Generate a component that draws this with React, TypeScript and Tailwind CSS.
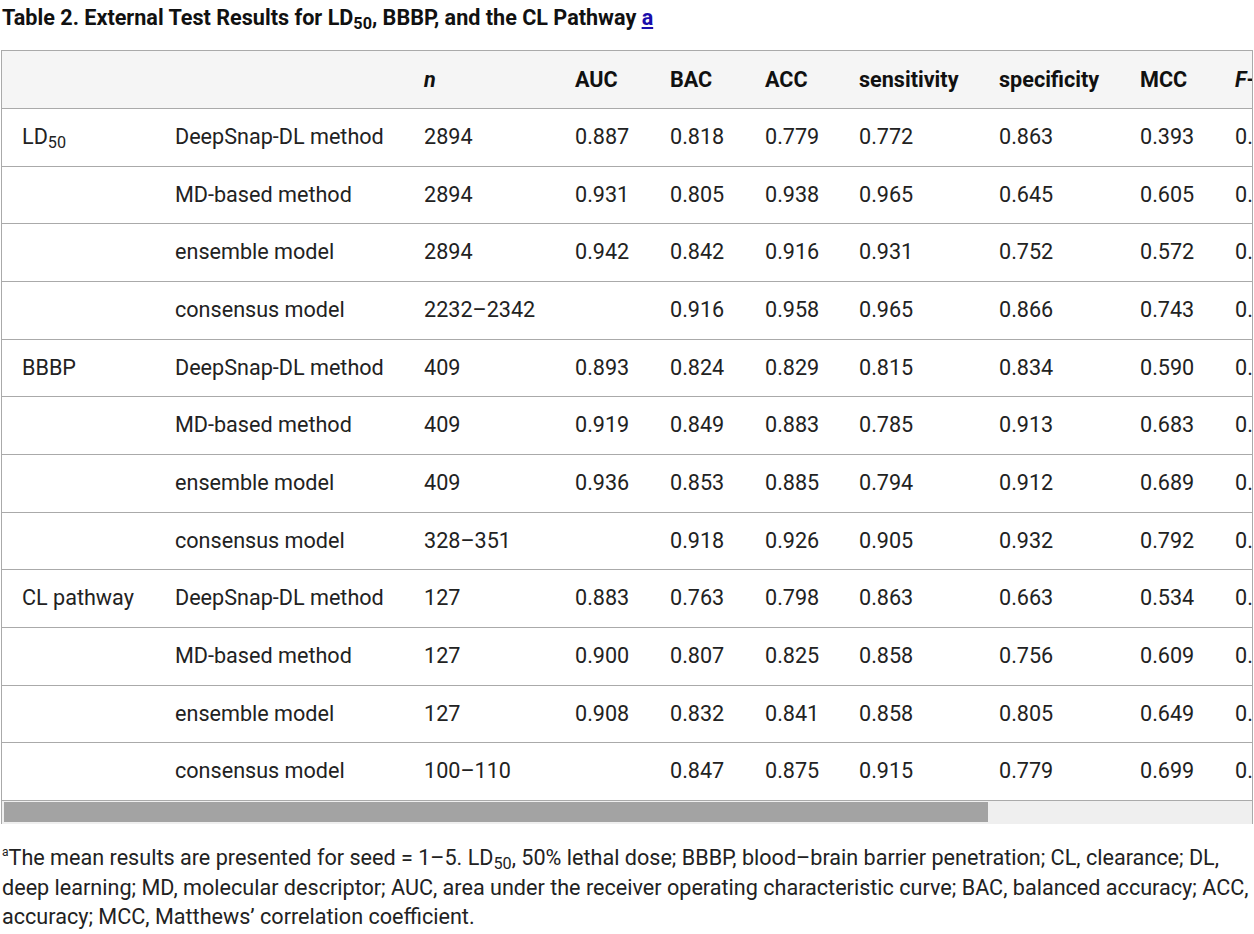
import React from "react";

type Row = {
  group?: React.ReactNode;
  method: string;
  n: string;
  auc: string;
  bac: string;
  acc: string;
  sen: string;
  spe: string;
  mcc: string;
  f: string;
};

const LD = (
  <span>
    LD<sub>50</sub>
  </span>
);

const rows: Row[] = [
  { group: LD, method: "DeepSnap-DL method", n: "2894", auc: "0.887", bac: "0.818", acc: "0.779", sen: "0.772", spe: "0.863", mcc: "0.393", f: "0.512" },
  { method: "MD-based method", n: "2894", auc: "0.931", bac: "0.805", acc: "0.938", sen: "0.965", spe: "0.645", mcc: "0.605", f: "0.671" },
  { method: "ensemble model", n: "2894", auc: "0.942", bac: "0.842", acc: "0.916", sen: "0.931", spe: "0.752", mcc: "0.572", f: "0.633" },
  { method: "consensus model", n: "2232\u20132342", auc: "", bac: "0.916", acc: "0.958", sen: "0.965", spe: "0.866", mcc: "0.743", f: "0.781" },
  { group: "BBBP", method: "DeepSnap-DL method", n: "409", auc: "0.893", bac: "0.824", acc: "0.829", sen: "0.815", spe: "0.834", mcc: "0.590", f: "0.874" },
  { method: "MD-based method", n: "409", auc: "0.919", bac: "0.849", acc: "0.883", sen: "0.785", spe: "0.913", mcc: "0.683", f: "0.919" },
  { method: "ensemble model", n: "409", auc: "0.936", bac: "0.853", acc: "0.885", sen: "0.794", spe: "0.912", mcc: "0.689", f: "0.920" },
  { method: "consensus model", n: "328\u2013351", auc: "", bac: "0.918", acc: "0.926", sen: "0.905", spe: "0.932", mcc: "0.792", f: "0.950" },
  { group: "CL pathway", method: "DeepSnap-DL method", n: "127", auc: "0.883", bac: "0.763", acc: "0.798", sen: "0.863", spe: "0.663", mcc: "0.534", f: "0.853" },
  { method: "MD-based method", n: "127", auc: "0.900", bac: "0.807", acc: "0.825", sen: "0.858", spe: "0.756", mcc: "0.609", f: "0.869" },
  { method: "ensemble model", n: "127", auc: "0.908", bac: "0.832", acc: "0.841", sen: "0.858", spe: "0.805", mcc: "0.649", f: "0.882" },
  { method: "consensus model", n: "100\u2013110", auc: "", bac: "0.847", acc: "0.875", sen: "0.915", spe: "0.779", mcc: "0.699", f: "0.905" },
];

const th = "px-5 py-3 leading-[33px] text-left font-bold text-[#111] border-b border-[#aaaaaa] whitespace-nowrap";
const td = "px-5 py-3 leading-[32.67px] text-left border-b border-[#aaaaaa] whitespace-nowrap";

export default function App() {
  return (
    <div
      className="bg-white text-[#222] min-h-[934px]"
      style={{ fontFamily: "Roboto, 'Noto Sans', Arial, sans-serif" }}
    >
      <div className="h-[50px] pl-[2px] text-[21.6px] leading-[36px] font-bold text-[#111]">
        Table 2. External Test Results for LD<sub>50</sub>, BBBP, and the CL Pathway{" "}
        <a href="#" className="text-[#1a0dab] underline">a</a>
      </div>

      <div className="ml-px w-[1252px] border-x border-t border-[#aaaaaa]">
        <div className="overflow-hidden w-full">
          <table className="table-fixed w-[1363px] border-separate border-spacing-0 text-[21.6px]">
            <colgroup>
              <col className="w-[153px]" />
              <col className="w-[249px]" />
              <col className="w-[151px]" />
              <col className="w-[95px]" />
              <col className="w-[95px]" />
              <col className="w-[94px]" />
              <col className="w-[140px]" />
              <col className="w-[141px]" />
              <col className="w-[95px]" />
              <col className="w-[150px]" />
            </colgroup>
            <thead>
              <tr className="bg-[#f5f5f5]">
                <th className={th}></th>
                <th className={th}></th>
                <th className={th}><i>n</i></th>
                <th className={th}>AUC</th>
                <th className={th}>BAC</th>
                <th className={th}>ACC</th>
                <th className={th}>sensitivity</th>
                <th className={th}>specificity</th>
                <th className={th}>MCC</th>
                <th className={th}><i>F</i>-measure</th>
              </tr>
            </thead>
            <tbody>
              {rows.map((r, i) => (
                <tr key={i}>
                  <td className={td}>{r.group ?? ""}</td>
                  <td className={td}>{r.method}</td>
                  <td className={td}>{r.n}</td>
                  <td className={td}>{r.auc}</td>
                  <td className={td}>{r.bac}</td>
                  <td className={td}>{r.acc}</td>
                  <td className={td}>{r.sen}</td>
                  <td className={td}>{r.spe}</td>
                  <td className={td}>{r.mcc}</td>
                  <td className={td}>{r.f}</td>
                </tr>
              ))}
            </tbody>
          </table>
        </div>
        <div className="h-[23px] bg-[#efefef] pt-px pl-[2px]">
          <div className="h-[20px] w-[984px] bg-[#a3a3a3]" />
        </div>
      </div>

      <p className="mt-[19px] w-[1252px] pl-[2px] text-[21.6px] leading-[29.5px] text-[#222]">
        <span className="relative -top-[9px] text-[12px] leading-none">a</span>The mean results are presented for seed = 1&ndash;5. LD<sub>50</sub>, 50% lethal dose; BBBP, blood&ndash;brain barrier penetration; CL, clearance; DL, deep learning; MD, molecular descriptor; AUC, area under the receiver operating characteristic curve; BAC, balanced accuracy; ACC, accuracy; MCC, Matthews&rsquo; correlation coefficient.
      </p>
    </div>
  );
}
